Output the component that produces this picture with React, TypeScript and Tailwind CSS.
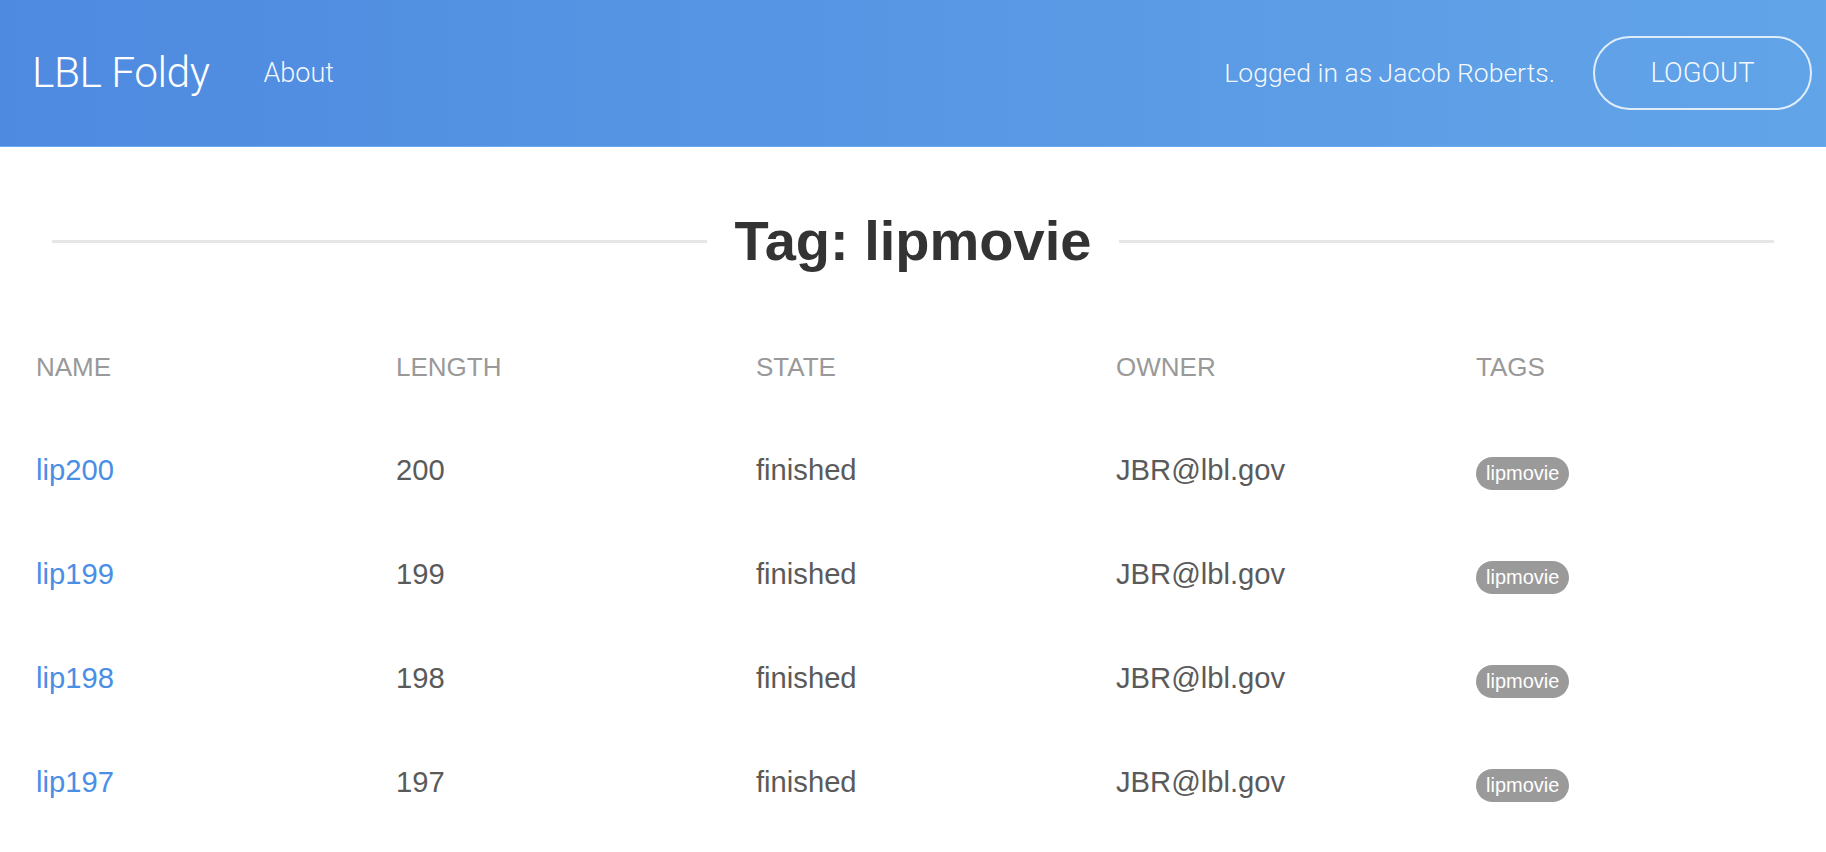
import React from "react";

const rows = [
  { name: "lip200", length: "200" },
  { name: "lip199", length: "199" },
  { name: "lip198", length: "198" },
  { name: "lip197", length: "197" },
];

const cols = "grid grid-cols-[360px_360px_360px_360px_1fr] pl-[36px]";

export default function App() {
  return (
    <div className="min-h-[852px] bg-white" style={{ fontFamily: '"Liberation Sans", Arial, sans-serif' }}>
      <header className="h-[147px] bg-linear-to-r from-[#4e8ae0] to-[#62a4e8] border-b border-[#6aaaf0] flex items-center px-[32px] text-white">
        <div className="flex items-center" style={{ fontFamily: 'Roboto, "Liberation Sans", sans-serif' }}>
          <span className="text-[42.5px] font-light tracking-[-0.5px] leading-none">LBL Foldy</span>
          <a className="ml-[54px] text-[27px] font-light leading-none text-white/95">About</a>
        </div>
        <div className="ml-auto flex items-center" style={{ fontFamily: 'Roboto, "Liberation Sans", sans-serif' }}>
          <span className="text-[26.5px] font-light text-white/95">Logged in as Jacob Roberts.</span>
          <button className="ml-[38px] w-[219px] h-[74px] rounded-full border-2 border-white/80 text-[27.5px] font-light text-white/95 -mr-[18px]">
            LOGOUT
          </button>
        </div>
      </header>

      <main className="pt-[66px]">
        <div className="flex items-center gap-[28px] px-[52px]">
          <div className="flex-1 h-[3px] bg-[#e6e6e6]" />
          <h1 className="text-[56px] font-bold leading-[56px] text-[#333]">Tag: lipmovie</h1>
          <div className="flex-1 h-[3px] bg-[#e6e6e6]" />
        </div>

        <div className="mt-[46px]">
          <div className={`${cols} h-[104px] items-center text-[26px] text-[#999] uppercase`}>
            <div>Name</div>
            <div>Length</div>
            <div>State</div>
            <div>Owner</div>
            <div>Tags</div>
          </div>
          {rows.map((r) => (
            <div key={r.name} className={`${cols} h-[104px] items-center text-[29.2px] text-[#5a5a5a]`}>
              <a className="text-[#4a8ee6]">{r.name}</a>
              <div>{r.length}</div>
              <div>finished</div>
              <div>JBR@lbl.gov</div>
              <div>
                <span className="inline-flex items-center h-[33px] px-[10px] rounded-full bg-[#9a9a9a] text-white text-[20px]">
                  lipmovie
                </span>
              </div>
            </div>
          ))}
        </div>
      </main>
    </div>
  );
}
